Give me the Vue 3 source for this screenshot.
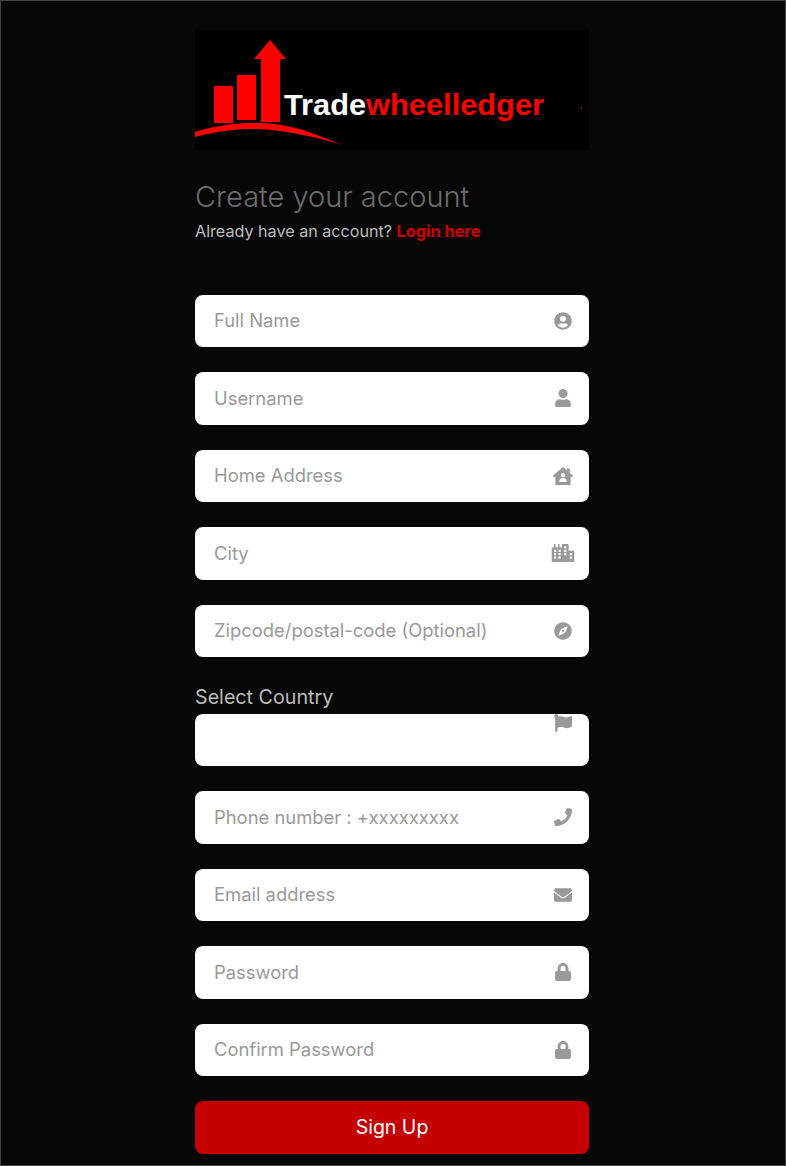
<script setup>
const circleUser = { box: '0 0 496 512', d: 'M248 8C111 8 0 119 0 256s111 248 248 248 248-111 248-248S385 8 248 8zm0 96c48.6 0 88 39.4 88 88s-39.4 88-88 88-88-39.4-88-88 39.4-88 88-88zm0 344c-58.7 0-111.3-26.6-146.5-68.2 18.8-35.4 55.6-59.8 98.5-59.8 2.4 0 4.8.4 7.1 1.1 13 4.2 26.6 6.9 40.9 6.9 14.3 0 28-2.7 40.9-6.9 2.3-.7 4.7-1.1 7.1-1.1 42.9 0 79.7 24.4 98.5 59.8C359.3 421.4 306.7 448 248 448z' }
const user = { box: '0 0 448 512', d: 'M224 256c70.7 0 128-57.3 128-128S294.7 0 224 0 96 57.3 96 128s57.3 128 128 128zm89.6 32h-16.7c-22.2 10.2-46.9 16-72.9 16s-50.6-5.8-72.9-16h-16.7C60.2 288 0 348.2 0 422.4V464c0 26.5 21.5 48 48 48h352c26.5 0 48-21.5 48-48v-41.6c0-74.2-60.2-134.4-134.4-134.4z' }
const house = { box: '0 0 576 512', d: 'M288 0 L400 98 V40 H480 V168 L576 252 L540 296 L504 264 V484 C504 500 490 512 474 512 H102 C86 512 72 500 72 484 V264 L36 296 L0 252 Z M288 170 C252 170 226 198 226 232 C226 266 252 294 288 294 C324 294 350 266 350 232 C350 198 324 170 288 170 Z M288 316 C230 316 184 346 184 396 V428 H392 V396 C392 346 346 316 288 316 Z' }
const city = { box: '0 0 640 512', d: 'M616 192H480V24c0-13-11-24-24-24H312c-13 0-24 11-24 24v72h-64V16c0-9-7-16-16-16h-16c-9 0-16 7-16 16v80h-64V16c0-9-7-16-16-16H80c-9 0-16 7-16 16v80H24c-13 0-24 11-24 24v368c0 13 11 24 24 24h592c13 0 24-11 24-24V216c0-13-11-24-24-24zM128 404c0 7-5 12-12 12H76c-7 0-12-5-12-12v-40c0-7 5-12 12-12h40c7 0 12 5 12 12zm0-96c0 7-5 12-12 12H76c-7 0-12-5-12-12v-40c0-7 5-12 12-12h40c7 0 12 5 12 12zm0-96c0 7-5 12-12 12H76c-7 0-12-5-12-12v-40c0-7 5-12 12-12h40c7 0 12 5 12 12zm128 192c0 7-5 12-12 12h-40c-7 0-12-5-12-12v-40c0-7 5-12 12-12h40c7 0 12 5 12 12zm0-96c0 7-5 12-12 12h-40c-7 0-12-5-12-12v-40c0-7 5-12 12-12h40c7 0 12 5 12 12zm0-96c0 7-5 12-12 12h-40c-7 0-12-5-12-12v-40c0-7 5-12 12-12h40c7 0 12 5 12 12zm160 96c0 7-5 12-12 12h-40c-7 0-12-5-12-12v-40c0-7 5-12 12-12h40c7 0 12 5 12 12zm0-96c0 7-5 12-12 12h-40c-7 0-12-5-12-12v-40c0-7 5-12 12-12h40c7 0 12 5 12 12zm0-96c0 7-5 12-12 12h-40c-7 0-12-5-12-12V76c0-7 5-12 12-12h40c7 0 12 5 12 12zm160 288c0 7-5 12-12 12h-40c-7 0-12-5-12-12v-40c0-7 5-12 12-12h40c7 0 12 5 12 12zm0-96c0 7-5 12-12 12h-40c-7 0-12-5-12-12v-40c0-7 5-12 12-12h40c7 0 12 5 12 12z' }
const compass = { box: '0 0 496 512', d: 'M225.38 233.37c-12.5 12.5-12.5 32.76 0 45.25 12.49 12.5 32.76 12.5 45.25 0 12.5-12.5 12.5-32.76 0-45.25-12.5-12.49-32.76-12.49-45.25 0zM248 8C111.03 8 0 119.03 0 256s111.03 248 248 248 248-111.03 248-248S384.97 8 248 8zm126.14 148.05L308.17 300.4a31.938 31.938 0 0 1-15.77 15.77l-144.34 65.97c-16.65 7.61-33.81-9.55-26.2-26.2l65.98-144.35a31.938 31.938 0 0 1 15.77-15.77l144.34-65.97c16.65-7.6 33.8 9.55 26.19 26.2z' }
const flag = { box: '0 0 512 512', d: 'M349.565 98.783C295.978 98.783 251.721 64 184.348 64c-24.955 0-47.309 4.384-68.045 12.013a55.947 55.947 0 0 0 3.586-23.562C118.117 24.015 94.806 1.206 66.338.048 34.345-1.254 8 24.296 8 56c0 19.026 9.497 35.825 24 45.945V488c0 13.255 10.745 24 24 24h16c13.255 0 24-10.745 24-24v-94.4c28.311-12.064 63.582-22.122 114.435-22.122 53.588 0 97.844 34.783 165.217 34.783 48.169 0 86.667-16.294 122.505-40.858C506.84 359.452 512 349.571 512 339.045v-243.1c0-23.393-24.269-38.87-45.485-29.016-34.338 15.948-76.454 31.854-116.95 31.854z' }
const phone = { box: '0 0 512 512', d: 'M493.4 24.6l-104-24c-11.3-2.6-22.9 3.3-27.5 13.9l-48 112c-4.2 9.8-1.4 21.3 6.9 28l60.6 49.6c-36 76.7-98.9 140.5-177.2 177.2l-49.6-60.6c-6.8-8.3-18.2-11.1-28-6.9l-112 48C3.9 366.5-2 378.1.6 389.4l24 104C27.1 504.2 36.7 512 48 512c256.1 0 464-207.5 464-464 0-11.2-7.7-20.9-18.6-23.4z' }
const envelope = { box: '0 0 512 512', d: 'M502.3 190.8c3.9-3.1 9.7-.2 9.7 4.7V400c0 26.5-21.5 48-48 48H48c-26.5 0-48-21.5-48-48V195.6c0-5 5.7-7.8 9.7-4.7 22.4 17.4 52.1 39.5 154.1 113.6 21.1 15.4 56.7 47.8 92.2 47.6 35.7.3 72-32.8 92.3-47.6 102-74.1 131.6-96.3 154-113.7zM256 320c23.2.4 56.6-29.2 73.4-41.4 132.7-96.3 142.8-104.7 173.4-128.7 5.8-4.5 9.2-11.5 9.2-18.9v-19c0-26.5-21.5-48-48-48H48C21.5 64 0 85.5 0 112v19c0 7.4 3.4 14.3 9.2 18.9 30.6 23.9 40.7 32.4 173.4 128.7 16.8 12.2 50.2 41.8 73.4 41.4z' }
const lock = { box: '0 0 448 512', d: 'M400 224h-24v-72C376 68.2 307.8 0 224 0S72 68.2 72 152v72H48c-26.5 0-48 21.5-48 48v192c0 26.5 21.5 48 48 48h352c26.5 0 48-21.5 48-48V272c0-26.5-21.5-48-48-48zm-104 0H152v-72c0-39.7 32.3-72 72-72s72 32.3 72 72v72z' }

const topFields = [
  { placeholder: 'Full Name', icon: circleUser },
  { placeholder: 'Username', icon: user },
  { placeholder: 'Home Address', icon: house },
  { placeholder: 'City', icon: city },
  { placeholder: 'Zipcode/postal-code (Optional)', icon: compass },
]
const bottomFields = [
  { placeholder: 'Phone number : +xxxxxxxxx', icon: phone },
  { placeholder: 'Email address', icon: envelope },
  { placeholder: 'Password', icon: lock, type: 'password' },
  { placeholder: 'Confirm Password', icon: lock, type: 'password' },
]
</script>

<template>
  <main class="page">
    <div class="wrap">
      <svg class="logo" viewBox="0 0 394 120" width="394" height="120">
        <rect width="394" height="120" fill="#000" />
        <g fill="#f00">
          <rect x="19" y="56" width="19" height="37" />
          <rect x="42" y="45" width="19" height="45" />
          <path d="M66 92V29H59L75 10 91 29H85V92Z" />
          <path d="M0 102C30 92 60 92 80 94 105 97 128 107 147 115 125 108 105 104 85 101 60 97 30 99 0 107Z" />
        </g>
        <rect x="386" y="76" width="1" height="3" fill="#700" />
        <text x="89" y="85" class="logo-text" textLength="260" lengthAdjust="spacingAndGlyphs"><tspan fill="#fff">Trade</tspan><tspan fill="#f00">wheelledger</tspan></text>
      </svg>

      <h1 class="title">Create your account</h1>
      <p class="sub">Already have an account? <a href="#" class="login">Login here</a></p>

      <form class="form" @submit.prevent>
        <div v-for="f in topFields" :key="f.placeholder" class="field">
          <input class="input" type="text" :placeholder="f.placeholder" />
          <svg class="icon" :viewBox="f.icon.box"><path :d="f.icon.d" /></svg>
        </div>

        <div class="field">
          <label class="label">Select Country</label>
          <div class="select-wrap">
            <select class="input"></select>
            <svg class="icon icon-flag" :viewBox="flag.box"><path :d="flag.d" /></svg>
          </div>
        </div>

        <div v-for="f in bottomFields" :key="f.placeholder" class="field">
          <input class="input" :type="f.type || 'text'" :placeholder="f.placeholder" />
          <svg class="icon" :viewBox="f.icon.box"><path :d="f.icon.d" /></svg>
        </div>

        <button class="submit" type="submit">Sign Up</button>
      </form>
    </div>
  </main>
</template>

<style>
html, body {
  margin: 0;
  background: #070707;
}
</style>

<style scoped>
.page {
  box-sizing: border-box;
  height: 1166px;
  padding-right: 2px;
  overflow: hidden;
  background: #070707;
  border: 1px solid #444;
  font-family: Inter, "Noto Sans", sans-serif;
}

.wrap {
  width: 394px;
  margin: 0 auto;
  padding-top: 29px;
}

.logo {
  display: block;
}

.logo-text {
  font-family: "Liberation Sans", Arial, sans-serif;
  font-weight: 700;
  font-size: 29px;
}

.title {
  margin: 29px 0 0;
  font-size: 29px;
  line-height: 36px;
  font-weight: 300;
  color: #6c6c6c;
}

.sub {
  margin: 6px 0 0;
  font-size: 16.15px;
  line-height: 20px;
  color: #bdbdbd;
}

.login {
  color: #c40000;
  font-weight: 800;
  text-decoration: none;
}

.form {
  margin-top: 53.75px;
  display: flex;
  flex-direction: column;
  gap: 25px;
}

.field {
  position: relative;
}

.input {
  display: block;
  box-sizing: border-box;
  width: 100%;
  height: 52.5px;
  padding: 0 50px 2px 19px;
  border: 0;
  border-radius: 8px;
  background: #fff;
  font: 400 18.4px Inter, "Noto Sans", sans-serif;
  color: #333;
  appearance: none;
  outline: none;
}

.input::placeholder {
  color: #999;
  opacity: 1;
}

.icon {
  position: absolute;
  right: 14px;
  top: 17px;
  width: 24px;
  height: 18px;
  fill: #999;
}

.label {
  display: block;
  height: 31.5px;
  padding-top: 2px;
  box-sizing: border-box;
  font-size: 19.7px;
  line-height: 26px;
  color: #bdbdbd;
}

.select-wrap {
  position: relative;
}

.icon-flag {
  top: 0;
}

.submit {
  display: block;
  width: 100%;
  height: 53px;
  padding: 0 0 2px;
  border: 0;
  border-radius: 8px;
  background: #c40000;
  color: #fff;
  font: 400 19.5px Inter, "Noto Sans", sans-serif;
}
</style>
